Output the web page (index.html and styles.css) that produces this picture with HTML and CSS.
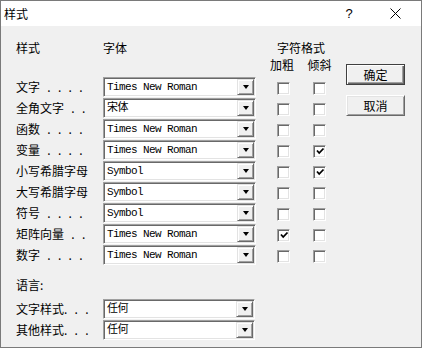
FILE: index.html
```html
<!DOCTYPE html>
<html lang="zh-CN">
<head>
    <meta charset="UTF-8">
    <title>样式</title>
    <link rel="stylesheet" href="styles.css">
</head>
<body>

    <div class="window">
        <div class="titlebar">
            <span class="title">样式</span>
            <span class="help">?</span>
            <span class="close">
                <svg width="11" height="11" viewBox="0 0 11 11"><path d="M0.5 0.5L10.5 10.5M10.5 0.5L0.5 10.5" stroke="#000" stroke-width="1"/></svg>
            </span>
        </div>

        <div class="content">
            <div class="form">
                <div class="styles-head">
                    <div class="hd">样式</div>
                    <div class="hd col-font">字体</div>
                    <div class="hd col-format">字符格式</div>
                    <div class="hd2 col-bold">加粗</div>
                    <div class="hd2 col-italic">倾斜</div>
                </div>

                <div class="styles-grid">
                    <div class="label">文字 . . . .</div>
                    <div class="combo"><span class="value">Times New Roman</span><span class="drop"></span></div>
                    <span class="check col-bold"></span>
                    <span class="check col-italic"></span>

                    <div class="label">全角文字 . .</div>
                    <div class="combo"><span class="value">宋体</span><span class="drop"></span></div>
                    <span class="check col-bold"></span>
                    <span class="check col-italic"></span>

                    <div class="label">函数 . . . .</div>
                    <div class="combo"><span class="value">Times New Roman</span><span class="drop"></span></div>
                    <span class="check col-bold"></span>
                    <span class="check col-italic"></span>

                    <div class="label">变量 . . . .</div>
                    <div class="combo"><span class="value">Times New Roman</span><span class="drop"></span></div>
                    <span class="check col-bold"></span>
                    <span class="check col-italic"><svg width="9" height="9" viewBox="0 0 9 9"><path d="M1 3.5L3.2 6L7.5 1.5" fill="none" stroke="#000" stroke-width="1.8"/></svg></span>

                    <div class="label">小写希腊字母</div>
                    <div class="combo"><span class="value">Symbol</span><span class="drop"></span></div>
                    <span class="check col-bold"></span>
                    <span class="check col-italic"><svg width="9" height="9" viewBox="0 0 9 9"><path d="M1 3.5L3.2 6L7.5 1.5" fill="none" stroke="#000" stroke-width="1.8"/></svg></span>

                    <div class="label">大写希腊字母</div>
                    <div class="combo"><span class="value">Symbol</span><span class="drop"></span></div>
                    <span class="check col-bold"></span>
                    <span class="check col-italic"></span>

                    <div class="label">符号 . . . .</div>
                    <div class="combo"><span class="value">Symbol</span><span class="drop"></span></div>
                    <span class="check col-bold"></span>
                    <span class="check col-italic"></span>

                    <div class="label">矩阵向量 . .</div>
                    <div class="combo"><span class="value">Times New Roman</span><span class="drop"></span></div>
                    <span class="check col-bold"><svg width="9" height="9" viewBox="0 0 9 9"><path d="M1 3.5L3.2 6L7.5 1.5" fill="none" stroke="#000" stroke-width="1.8"/></svg></span>
                    <span class="check col-italic"></span>

                    <div class="label">数字 . . . .</div>
                    <div class="combo"><span class="value">Times New Roman</span><span class="drop"></span></div>
                    <span class="check col-bold"></span>
                    <span class="check col-italic"></span>
                </div>

                <div class="lang-title">语言:</div>
                <div class="lang-grid">
                    <div class="label">文字样式. . .</div>
                    <div class="combo"><span class="value">任何</span><span class="drop"></span></div>
                    <div class="label">其他样式. . .</div>
                    <div class="combo"><span class="value">任何</span><span class="drop"></span></div>
                </div>
            </div>

            <div class="buttons">
                <button class="btn default">确定</button>
                <button class="btn">取消</button>
            </div>
        </div>
    </div>

</body>
</html>
```

FILE: styles.css
```css
body {
    margin: 0;
    font-family: "Noto Sans CJK SC", "Microsoft YaHei", sans-serif;
    font-size: 12px;
    color: #000;
    background-color: #f0f0f0;
}
.window {
    width: 422px;
    height: 348px;
    box-sizing: border-box;
    border: 1px solid #7a7a7a;
    background-color: #f0f0f0;
    display: flex;
    flex-direction: column;
}
.titlebar {
    height: 25px;
    background-color: #fff;
    display: flex;
    align-items: center;
    padding-left: 3px;
}
.title {
    flex: 1;
    line-height: 16px;
}
.help {
    font-family: "Liberation Sans", sans-serif;
    font-size: 13px;
    width: 46px;
    text-align: center;
}
.close {
    width: 46px;
    display: flex;
    justify-content: center;
    margin-right: 3px;
}
.content {
    flex: 1;
    display: flex;
    padding: 14px 0 0 15px;
}
.styles-head,
.styles-grid {
    display: grid;
    grid-template-columns: 87px 153px 21px 13px 23px 13px;
    row-gap: 1px;
}
.styles-head {
    grid-template-rows: 16px 19px;
}
.styles-grid {
    grid-auto-rows: 20px;
    margin-top: 1px;
}
.hd {
    line-height: 16px;
    grid-row: 1;
}
.col-font {
    grid-column: 2;
}
.col-format {
    grid-column: 4 / 7;
    white-space: nowrap;
}
.hd2 {
    grid-row: 2;
    line-height: 16px;
    white-space: nowrap;
    justify-self: center;
}
.col-bold {
    grid-column: 4;
}
.col-italic {
    grid-column: 6;
}
.hd2.col-bold {
    margin-left: -3px;
}
.label {
    grid-column: 1;
    line-height: 20px;
    white-space: nowrap;
    word-spacing: 4.6px;
}
.combo {
    grid-column: 2;
    height: 20px;
    box-sizing: border-box;
    background-color: #fff;
    border: 1px solid;
    border-color: #a0a0a0 #fff #fff #a0a0a0;
    box-shadow: inset 1px 1px 0 #696969, inset -1px -1px 0 #e3e3e3;
    display: flex;
    align-items: center;
    padding: 1px 1px 1px 3px;
}
.value {
    flex: 1;
    font-family: "Liberation Mono", "Noto Sans CJK SC", monospace;
    font-size: 11px;
    letter-spacing: -0.6px;
    line-height: 16px;
    white-space: nowrap;
}
.drop {
    width: 17px;
    height: 16px;
    box-sizing: border-box;
    background-color: #f0f0f0;
    border: 1px solid;
    border-color: #e3e3e3 #696969 #696969 #e3e3e3;
    box-shadow: inset 1px 1px 0 #fff, inset -1px -1px 0 #a0a0a0;
    display: flex;
    align-items: center;
    justify-content: center;
}
.drop::after {
    content: "";
    border-left: 3.5px solid transparent;
    border-right: 3.5px solid transparent;
    border-top: 4px solid #000;
}
.check {
    width: 13px;
    height: 13px;
    box-sizing: border-box;
    align-self: center;
    background-color: #fff;
    border: 1px solid;
    border-color: #a0a0a0 #fff #fff #a0a0a0;
    box-shadow: inset 1px 1px 0 #696969, inset -1px -1px 0 #e3e3e3;
    display: flex;
    align-items: center;
    justify-content: center;
    margin-top: 2px;
}
.check svg {
    display: block;
    margin: 1px 0 0 1px;
}
.lang-title {
    margin-top: 12px;
    line-height: 16px;
}
.lang-grid {
    display: grid;
    grid-template-columns: 87px 152px;
    grid-auto-rows: 20px;
    row-gap: 1px;
    margin-top: 6px;
}
.buttons {
    display: flex;
    flex-direction: column;
    gap: 10px;
    margin: 24px 0 0 20px;
}
.btn {
    width: 59px;
    height: 21px;
    padding: 0;
    font-family: inherit;
    font-size: 12px;
    background-color: #f0f0f0;
    border: 1px solid;
    border-color: #fff #696969 #696969 #fff;
    box-shadow: inset 1px 1px 0 #e3e3e3, inset -1px -1px 0 #a0a0a0;
    border-radius: 0;
}
.btn.default {
    border-color: #404040;
    box-shadow: inset 1px 1px 0 #fff, inset -1px -1px 0 #696969, inset -2px -2px 0 #a0a0a0;
}
```
